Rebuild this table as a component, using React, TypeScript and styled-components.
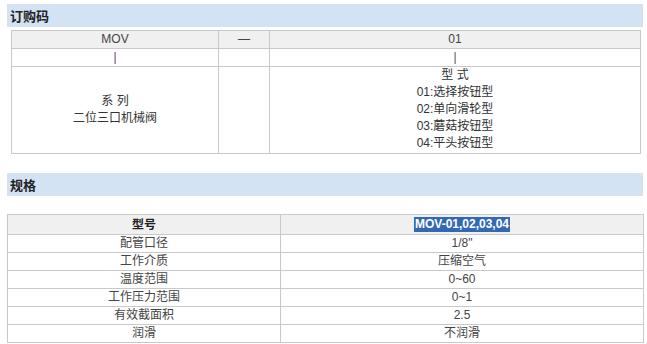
import styled, { createGlobalStyle } from "styled-components";

const GlobalStyle = createGlobalStyle`
  html, body {
    margin: 0;
    padding: 0;
    background: #ffffff;
  }

  body {
    font-family: "Liberation Sans", "Noto Sans CJK SC", sans-serif;
    font-size: 12px;
    color: #333333;
  }
`;

const orderTypes = [
  "01:选择按钮型",
  "02:单向滑轮型",
  "03:蘑菇按钮型",
  "04:平头按钮型",
];

const specRows = [
  { label: "配管口径", value: "1/8\"" },
  { label: "工作介质", value: "压缩空气" },
  { label: "温度范围", value: "0~60" },
  { label: "工作压力范围", value: "0~1" },
  { label: "有效截面积", value: "2.5" },
  { label: "润滑", value: "不润滑" },
];

export default function App() {
  return (
    <Page>
      <GlobalStyle />

      <SectionBar>
        <SectionTitle>订购码</SectionTitle>
      </SectionBar>

      <OrderTable>
        <colgroup>
          <col style={{ width: 207 }} />
          <col style={{ width: 51 }} />
          <col />
        </colgroup>
        <tbody>
          <HeadRow>
            <Cell>MOV</Cell>
            <Cell>—</Cell>
            <Cell>01</Cell>
          </HeadRow>
          <tr>
            <Cell>
              <Stem $tone="accent">|</Stem>
            </Cell>
            <Cell />
            <Cell>
              <Stem>|</Stem>
            </Cell>
          </tr>
          <tr>
            <Cell>
              <Lines>
                <span>系 列</span>
                <span>二位三口机械阀</span>
              </Lines>
            </Cell>
            <Cell />
            <Cell>
              <Lines>
                <span>型 式</span>
                {orderTypes.map((item) => (
                  <span key={item}>{item}</span>
                ))}
              </Lines>
            </Cell>
          </tr>
        </tbody>
      </OrderTable>

      <SectionBar $spaced>
        <SectionTitle>规格</SectionTitle>
      </SectionBar>

      <SpecTable>
        <colgroup>
          <col style={{ width: 273 }} />
          <col />
        </colgroup>
        <tbody>
          <HeadRow>
            <Cell>
              <Strong>型号</Strong>
            </Cell>
            <Cell>
              <Selected>MOV-01,02,03,04</Selected>
            </Cell>
          </HeadRow>
          {specRows.map((row) => (
            <tr key={row.label}>
              <Cell>{row.label}</Cell>
              <Cell>{row.value}</Cell>
            </tr>
          ))}
        </tbody>
      </SpecTable>
    </Page>
  );
}

const Page = styled.div`
  display: flex;
  flex-direction: column;
  padding: 4px 4px 0 7px;
  width: 636px;
`;

const SectionBar = styled.div<{ $spaced?: boolean }>`
  display: flex;
  align-items: center;
  height: 23px;
  margin-top: ${({ $spaced }) => ($spaced ? "19px" : "0")};
  padding-left: 3px;
  background: #d3e3f4;
`;

const SectionTitle = styled.h3`
  margin: 0;
  font-family: "Noto Sans CJK SC", sans-serif;
  font-size: 13px;
  font-weight: 700;
  color: #222222;
  line-height: 1;
`;

const BaseTable = styled.table`
  border-collapse: collapse;
  table-layout: fixed;
  border: 1px solid #c9c9c9;

  td {
    border: 1px solid #c9c9c9;
  }
`;

const OrderTable = styled(BaseTable)`
  width: 630px;
  margin: 3px 0 0 4px;
`;

const SpecTable = styled(BaseTable)`
  width: 637px;
  margin-top: 18px;
`;

const HeadRow = styled.tr`
  background: #f0f0f0;
`;

const Cell = styled.td`
  height: 17px;
  padding: 0;
  text-align: center;
  vertical-align: middle;
  color: #444444;
  font-family: "Liberation Sans", "Noto Sans CJK SC", sans-serif;
  font-size: 12px;
  line-height: 17px;
`;

const Stem = styled.span<{ $tone?: "accent" }>`
  color: ${({ $tone }) => ($tone === "accent" ? "#6a3c64" : "#555555")};
`;

const Lines = styled.div`
  display: flex;
  flex-direction: column;
  align-items: center;
  color: #333333;
  line-height: 17px;
  padding-bottom: 1px;
`;

const Strong = styled.span`
  font-family: "Noto Sans CJK SC", sans-serif;
  font-weight: 700;
  color: #222222;
`;

const Selected = styled.span`
  display: inline-block;
  padding: 0 1px;
  background: #3368b5;
  color: #ffffff;
  font-weight: 700;
  line-height: 15px;
`;
